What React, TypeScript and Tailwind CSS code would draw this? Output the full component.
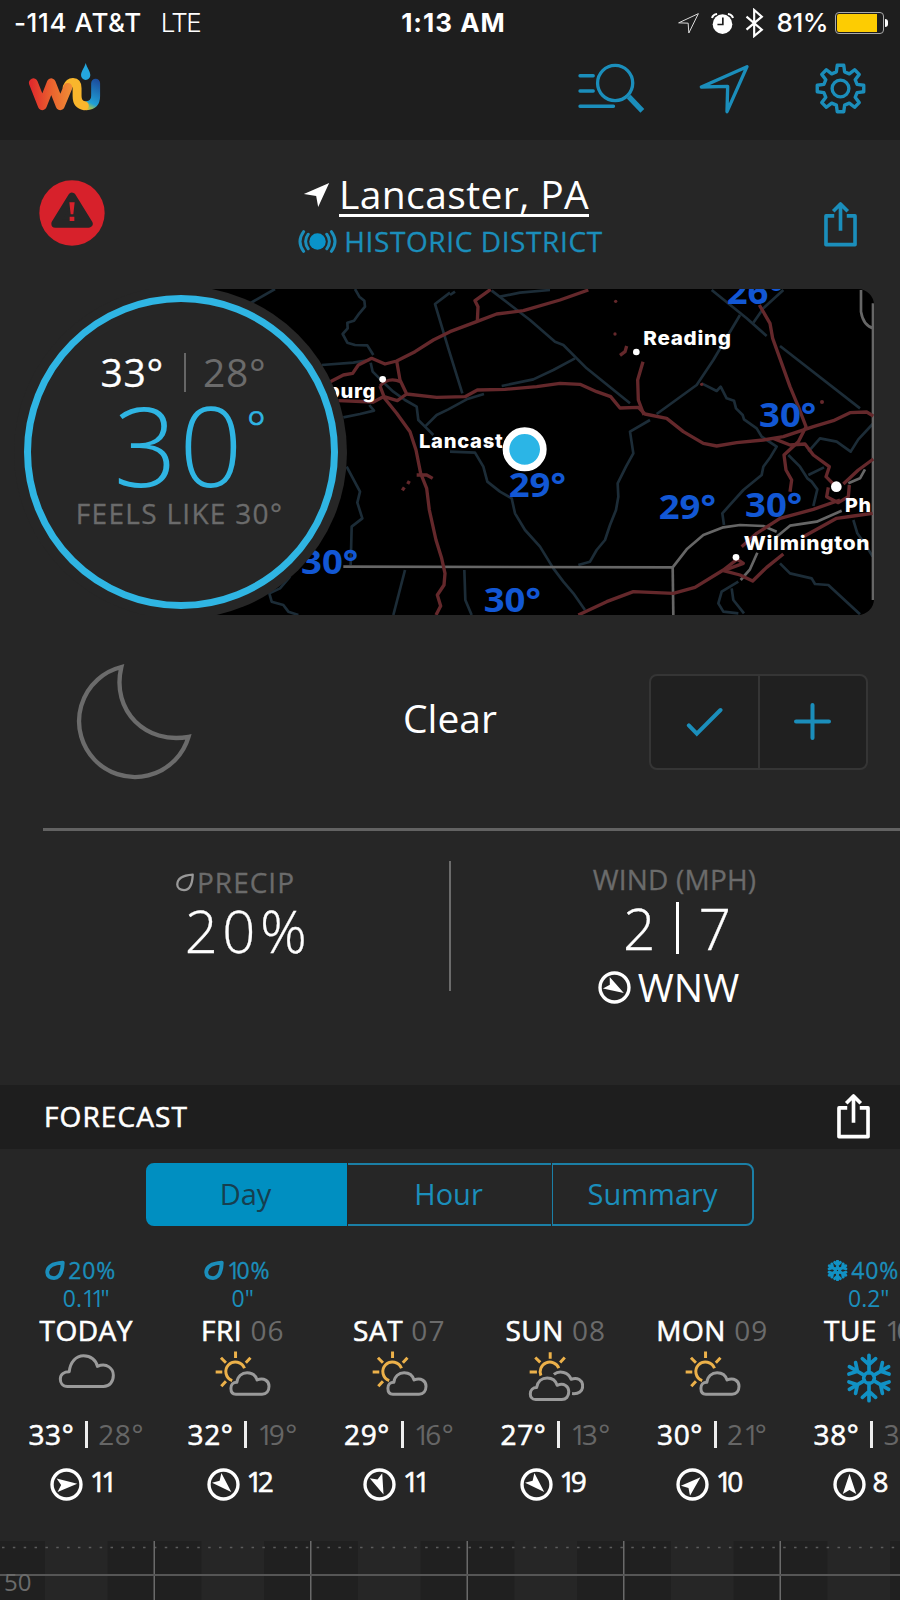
import type { ReactNode } from "react";

const BLUE = "#1b8ebb";

type Sky = "cloud" | "sunCloud" | "sunClouds" | "snow";

interface Day {
  name: string;
  date?: string;
  chance?: string;
  amount?: string;
  snow?: boolean;
  sky: Sky;
  high: string;
  low: string;
  wind: string;
  heading: number;
}

const days: Day[] = [
  { name: "TODAY", chance: "20%", amount: '0.11"', sky: "cloud", high: "33°", low: "28°", wind: "11", heading: 86 },
  { name: "FRI", date: "06", chance: "10%", amount: '0"', sky: "sunCloud", high: "32°", low: "19°", wind: "12", heading: 134 },
  { name: "SAT", date: "07", sky: "sunCloud", high: "29°", low: "16°", wind: "11", heading: 158 },
  { name: "SUN", date: "08", sky: "sunClouds", high: "27°", low: "13°", wind: "19", heading: 134 },
  { name: "MON", date: "09", sky: "sunCloud", high: "30°", low: "21°", wind: "10", heading: 48 },
  { name: "TUE", date: "10", chance: "40%", amount: '0.2"', snow: true, sky: "snow", high: "38°", low: "31°", wind: "8", heading: 0 },
];

// Eight-tooth gear outline around the origin
const gearPath =
  Array.from({ length: 8 }, (_, i) => {
    const at = (deg: number, r: number) => {
      const a = ((i * 45 + deg - 90) * Math.PI) / 180;
      return `${(Math.cos(a) * r).toFixed(1)},${(Math.sin(a) * r).toFixed(1)}`;
    };
    return `${i === 0 ? "M" : "L"}${at(-14, 51)} L${at(-8, 70)} L${at(8, 70)} L${at(14, 51)}`;
  }).join(" ") + " Z";

// Tightens the wide tabular "1" of the UI font
function Num({ text }: { text: string }) {
  return (
    <>
      {text.split("").map((c, i) =>
        c === "1" ? (
          <span key={i} className="tracking-[-0.17em]">
            1
          </span>
        ) : (
          c
        ),
      )}
    </>
  );
}

function Logo() {
  return (
    <svg viewBox="82 185 220 148" className="w-[73px] h-[49px]" fill="none" strokeWidth="27" strokeLinecap="round" strokeLinejoin="round">
      <defs>
        <linearGradient id="warm" gradientUnits="userSpaceOnUse" x1="90" y1="0" x2="215" y2="0">
          <stop offset="0" stopColor="#e02a2c" />
          <stop offset="0.5" stopColor="#ea622e" />
          <stop offset="1" stopColor="#f08f36" />
        </linearGradient>
        <linearGradient id="cool" gradientUnits="userSpaceOnUse" x1="246" y1="328" x2="288" y2="240">
          <stop offset="0.02" stopColor="#f9b62c" />
          <stop offset="0.14" stopColor="#9bbf5a" />
          <stop offset="0.3" stopColor="#1fa0d6" />
          <stop offset="1" stopColor="#1c4f9f" />
        </linearGradient>
      </defs>
      <path d="M258 317 Q286 316 286 288 V249" stroke="url(#cool)" />
      <path d="M200 262 Q206 247 217 247 Q230 248 230 264 V288 Q230 314 252 317" stroke="#f9b62c" />
      <path d="M98 248 L125 317 L152 248 L179 317 L202 262" stroke="url(#warm)" />
      <path d="M256 188 C260 203 270 214 270 225 A14 14 0 0 1 242 225 C242 214 252 203 256 188Z" fill="#24a6dd" />
    </svg>
  );
}

function ShareIcon({ color }: { color: string }) {
  return (
    <svg viewBox="1122 605 100 137" className="w-[33px] h-[46px]" fill="none" stroke={color} strokeWidth="11" strokeLinejoin="round">
      <path d="M1153 649 H1128 V736 H1216 V649 H1191" />
      <path d="M1172 694 V614 M1150 635 L1172 613 L1194 635" />
    </svg>
  );
}

function Compass({ heading }: { heading: number }) {
  return (
    <svg viewBox="-49 -49 98 98" className="w-[33px] h-[33px] shrink-0">
      <circle r="43" fill="none" stroke="#fff" strokeWidth="10" />
      <path d="M0 -32 L20 28 L0 16 L-20 28Z" fill="#fff" transform={`rotate(${heading})`} />
    </svg>
  );
}

function Drop({ color, width }: { color: string; width: number }) {
  return (
    <svg viewBox="133 598 62 62" className="w-[20px] h-[20px] shrink-0" fill="none" stroke={color} strokeWidth={width} strokeLinejoin="round">
      <path d="M188 606 C158 608 140 619 140 637 C140 648 149 654 161 654 C181 654 187 630 188 606Z" />
    </svg>
  );
}

function Snowflake({ small }: { small?: boolean }) {
  const arms = [0, 60, 120, 180, 240, 300];
  return (
    <svg
      viewBox="-75 -75 150 150"
      className={small ? "w-[21px] h-[21px] shrink-0" : "w-[50px] h-[50px] mt-[4px]"}
      fill="none"
      stroke="#1191c4"
      strokeWidth={small ? 21 : 11}
      strokeLinecap="round"
    >
      <circle r="16" />
      {arms.map((a) => (
        <path key={a} d="M0 -16 V-68 M0 -40 L-20 -58 M0 -40 L20 -58" transform={`rotate(${a})`} />
      ))}
    </svg>
  );
}

const GOLD = "#ecb14a";
const CLOUD = "#9a9a9a";

function SkyIcon({ sky }: { sky: Sky }) {
  if (sky === "snow") return <Snowflake />;
  if (sky === "cloud") {
    return (
      <svg viewBox="174 57 172 150" className="w-[57px] h-[50px]" fill="none" stroke={CLOUD} strokeWidth="9">
        <path d="M203 170 C187 170 181 158 181 147 C181 133 192 125 208 125 C211 95 229 77 251 77 C273 77 289 90 293 109 C322 97 341 116 341 136 C341 155 330 170 311 170Z" strokeLinejoin="round" />
      </svg>
    );
  }
  if (sky === "sunCloud") {
    return (
      <svg viewBox="643 56 172 150" className="w-[57px] h-[50px]" fill="none" strokeWidth="9">
        <g stroke={GOLD}>
          <path d="M735 114 A29 29 0 1 0 698 151" />
          <path d="M708 63 V83 M753 82 L739 97 M664 82 L679 97 M648 125 H668 M665 168 L679 153" />
        </g>
        <path d="M709 192 C697 192 694 182 694 174 C694 163 701 156 712 156 C714 138 727 127 743 127 C759 127 769 136 773 149 C794 141 809 152 809 168 C809 182 801 192 788 192Z" stroke={CLOUD} strokeLinejoin="round" />
      </svg>
    );
  }
  return (
    <svg viewBox="232 57 172 162" className="w-[57px] h-[54px]" fill="none" strokeWidth="9">
      <g stroke={GOLD}>
        <path d="M274 137 A28 28 0 0 1 328 114" />
        <path d="M302 66 V86 M346 82 L332 97 M257 82 L272 97 M240 126 H262" />
      </g>
      <g stroke={CLOUD} strokeLinejoin="round">
        <path d="M313 133 C330 120 357 126 365 148 C384 140 400 151 400 168 C400 184 388 193 368 191" />
        <path d="M258 209 C246 209 242 200 242 192 C242 180 250 173 261 173 C264 154 277 144 293 144 C308 144 319 153 323 166 C344 158 358 169 358 185 C358 200 350 209 337 209Z" />
      </g>
    </svg>
  );
}

const waterways = [
  "M750 70 L825 27",
  "M1065 27 L1078 50 L1093 62 L1095 80 L1078 100 L1062 122 L1042 128 L1043 145 L1028 162 L1042 188 L1065 195 L1102 196 L1120 225",
  "M965 255 L1060 248 L1108 240",
  "M1112 248 L1118 275 L1148 305 L1180 335 L1215 360 L1250 380 L1255 420 L1275 440 L1310 405 L1345 388 L1400 358 L1452 342",
  "M1275 440 L1300 465",
  "M1350 38 L1305 72 L1345 205 L1387 340",
  "M1030 412 L1080 402 L1122 392 L1108 375",
  "M1040 560 L1080 635 L1072 668 L1087 715 L1055 740 L1052 855",
  "M1215 870 L1180 1005",
  "M870 890 L840 925 L808 940 L815 965 L850 975 L865 995 L895 1005",
  "M1350 45 L1365 35",
  "M1475 32 L1590 120 L1665 185 L1690 195 L1760 265 L1890 370",
  "M1500 50 L1560 38 L1650 30",
  "M1725 235 L1660 270 L1600 298 L1505 318",
  "M1350 515 L1425 518 L1450 560 L1462 605 L1500 635 L1535 655 L1545 700 L1575 750 L1620 800 L1660 865 L1690 905 L1720 940 L1755 990",
  "M1393 870 L1396 960 L1415 1005",
  "M1950 420 L1890 455 L1900 520 L1878 560 L1853 610 L1855 650 L1848 690 L1830 735 L1815 780 L1790 810 L1770 845 L1735 855",
  "M1970 402 L2090 315 L2140 240 L2220 105",
  "M2135 30 L2240 115 L2300 168 M2340 198 L2580 385",
  "M2350 30 L2290 85 L2260 128",
  "M2105 310 L2150 333 L2162 320 L2180 355 L2202 362 L2208 385 L2228 405 L2232 418 L2270 445 L2285 470 L2330 500 L2312 530 L2290 560 L2285 585 L2230 630 L2185 680 L2167 700 L2172 735",
  "M2365 525 L2400 560 L2422 595 L2435 605 L2452 628 L2440 678",
  "M2425 515 L2460 475 L2510 485 L2552 515 L2575 478 L2618 432",
  "M2425 585 L2472 562",
  "M2560 720 L2572 760 L2600 800 L2618 830",
  "M2340 850 L2370 880 L2435 895 L2445 912 L2485 915 L2580 1003",
  "M2215 905 L2165 935 L2155 970 L2170 995 L2215 1000 M2195 925 L2200 960 L2232 1000",
];

const roads = [
  "M985 308 L1030 285 L1058 280 L1075 255 L1115 235 L1155 252 L1190 243 L1245 215 L1300 180 L1350 155 L1430 125 L1490 102 L1570 92 L1680 60 L1765 30",
  "M1432 125 L1434 80 L1425 62 L1472 28",
  "M1190 243 L1200 300 L1220 342 L1310 352 L1395 350 L1432 330 L1515 328 L1610 320 L1680 310 L1740 313 L1790 335 L1832 350 L1860 384 L1915 382 L1935 402 L2000 415 L2050 455 L2110 490 L2150 498 L2210 488 L2290 480 L2350 470 L2440 440 L2500 422 L2550 398 L2600 396 L2620 408",
  "M1140 318 Q1165 290 1202 305 M1220 342 L1192 362 L1152 350 L1140 318",
  "M1015 362 L1120 366 L1150 350",
  "M1150 350 L1190 400 L1230 455 L1248 510 L1262 580 L1280 625 L1288 690 L1308 780 L1325 835 L1335 880 L1332 915 L1312 945 L1322 978 L1308 1005",
  "M1250 585 L1280 585 L1298 595",
  "M1228 603 L1223 612 M1213 622 L1207 631",
  "M1929 245 L1913 300 L1915 360 L1932 405",
  "M1880 198 L1875 215 L1860 226",
  "M2278 75 L2310 130 L2318 175 L2345 250 L2370 320 L2395 380 L2418 440 L2395 485 L2352 525 L2358 570 L2375 600 L2370 635",
  "M2320 475 L2370 495 L2415 492 L2440 525 L2488 560 L2478 590 L2500 612",
  "M1735 1005 L1820 965 L1900 935 L2020 940 L2085 922 L2170 870 L2215 835 M2225 800 L2270 760 L2340 715 L2440 688 L2520 660",
  "M2170 872 L2220 885 L2258 903 L2300 862 L2350 822 M2410 770 L2510 715 L2560 708 L2618 700",
  "M2485 622 L2480 650 L2515 668 L2545 650 L2548 615 M2530 612 L2575 570 L2620 537",
  "M2170 872 L2230 850 L2200 830",
];

const borders = [
  "M1030 860 L2018 862 L2060 808 L2110 765 L2170 742 L2220 735 L2290 738 L2330 755",
  "M2018 862 L2020 1005",
  "M2222 900 L2250 868 L2272 818 M2330 770 L2370 737 L2450 725 L2525 692 M2545 610 L2580 595 L2595 568",
  "M2583 30 V95 Q2590 138 2622 145",
  "M2619 70 V960",
];

const cities = [
  { label: "burg", x: 981, y: 353, w: 147, dot: [1148, 298, 10] },
  { label: "Lancast", x: 1257, y: 503, w: 253 },
  { label: "Reading", x: 1930, y: 194, w: 265, dot: [1909, 216, 10] },
  { label: "Wilmington", x: 2231, y: 809, w: 380, dot: [2208, 832, 10] },
  { label: "Ph", x: 2535, y: 695, w: 80, dot: [2509, 620, 16] },
];

const readings = [
  { label: "26°", x: 2180, y: 71 },
  { label: "30°", x: 2277, y: 442 },
  { label: "29°", x: 1526, y: 650 },
  { label: "29°", x: 1976, y: 718 },
  { label: "30°", x: 2235, y: 712 },
  { label: "30°", x: 903, y: 881 },
  { label: "30°", x: 1451, y: 995 },
];

function RadarMap() {
  return (
    <svg viewBox="543 27 2079 978" className="w-[693px] h-[326px] rounded-r-2xl bg-black" fill="none" strokeLinejoin="round">
      <g stroke="#1c2c37" strokeWidth="8">
        {waterways.map((d) => (
          <path key={d} d={d} />
        ))}
      </g>
      <g stroke="#666" strokeWidth="8">
        {borders.map((d) => (
          <path key={d} d={d} />
        ))}
      </g>
      <g stroke="#64282b" strokeWidth="10">
        {roads.map((d) => (
          <path key={d} d={d} />
        ))}
      </g>
      <g fill="#64282b">
        <circle cx="1847" cy="64" r="5" />
        <circle cx="1845" cy="162" r="5" />
        <circle cx="2105" cy="313" r="5" />
        <circle cx="2466" cy="366" r="6" />
      </g>
      <g fill="#1257d4" className="font-['Noto_Sans','Open_Sans',sans-serif] font-bold text-[100px]">
        {readings.map((r) => (
          <text key={`${r.x}-${r.y}`} x={r.x} y={r.y} textLength="172" lengthAdjust="spacingAndGlyphs">
            {r.label}
          </text>
        ))}
      </g>
      <g fill="#fff" className="font-['Inter',sans-serif] font-extrabold text-[58px] tracking-[2px]">
        {cities.map((c) => (
          <text key={c.label} x={c.x} y={c.y} textLength={c.w} lengthAdjust="spacingAndGlyphs">
            {c.label}
          </text>
        ))}
        {cities.map((c) => c.dot && <circle key={c.label} cx={c.dot[0]} cy={c.dot[1]} r={c.dot[2]} />)}
      </g>
      <circle cx="1574" cy="508" r="56" fill="#2bb5e6" stroke="#fff" strokeWidth="20" />
    </svg>
  );
}

function StatusBar() {
  return (
    <div className="flex items-center h-[46px] pl-[14px] pr-[12px] font-['Inter',sans-serif] text-[26px] leading-[46px]">
      <div className="flex flex-1">
        <span className="font-medium tracking-[0.6px]">-114 AT&amp;T</span>
        <span className="font-light ml-[19px] tracking-[-1.6px]">LTE</span>
      </div>
      <span className="font-bold tracking-[1px] pl-[5px]">1:13 AM</span>
      <div className="flex flex-1 items-center justify-end">
        <svg viewBox="677 30 70 70" className="w-[23px] h-[23px]" fill="none" stroke="#ddd" strokeWidth="3">
          <path d="M742 35 L713 94 L711 64 L682 63Z" />
        </svg>
        <svg viewBox="784 32 68 68" className="w-[23px] h-[23px] ml-[11px]">
          <circle cx="818" cy="68" r="29" fill="#fff" />
          <path d="M787 50 Q790 39 802 38 M849 50 Q846 39 834 38" fill="none" stroke="#fff" strokeWidth="6" />
          <path d="M819 48 V69 H803" fill="none" stroke="#1e1e1e" strokeWidth="5" />
        </svg>
        <svg viewBox="885 22 56 90" className="w-[19px] h-[30px] ml-[11px]" fill="none" stroke="#fff" strokeWidth="6.5">
          <path d="M889 48 L935 87 L912 106 V28 L935 48 L889 87" />
        </svg>
        <span className="font-medium ml-[13px] tracking-[-0.5px]">81%</span>
        <div className="flex items-center ml-[7px]">
          <div className="w-[49px] h-[22px] rounded-[4px] border border-[#aaa] p-px">
            <div className="w-[40px] h-full bg-[#fdcc02] rounded-l-[2px]" />
          </div>
          <div className="w-[3px] h-[8px] ml-px bg-white rounded-r-full" />
        </div>
      </div>
    </div>
  );
}

function NavBar() {
  return (
    <div className="flex items-start h-[94px] pl-[28px] pr-[34px] pt-[16px]">
      <Logo />
      <div className="flex ml-auto mt-px">
        <svg viewBox="384 189 202 153" className="w-[67px] h-[51px]" fill="none" stroke={BLUE} strokeWidth="10" strokeLinecap="round">
          <path d="M390 227 H430 M390 273 H430 M390 319 H491" />
          <circle cx="496" cy="249" r="53" />
          <path d="M537 290 L578 333" strokeWidth="16" strokeLinecap="butt" />
        </svg>
        <svg viewBox="746 192 153 153" className="w-[51px] h-[51px] ml-[54px]" fill="none" stroke={BLUE} strokeWidth="10" strokeLinejoin="round">
          <path d="M890 203 L830 338 L832 262 L753 264Z" />
        </svg>
        <svg viewBox="-76 -76 152 152" className="w-[51px] h-[51px] ml-[65px]" fill="none" stroke={BLUE} strokeWidth="10" strokeLinejoin="round">
          <path d={gearPath} />
          <circle r="25" />
        </svg>
      </div>
    </div>
  );
}

function LocationHeader() {
  return (
    <div className="flex items-start h-[149px] pl-[39px] pr-[43px]">
      <svg viewBox="117 540 198 198" className="w-[66px] h-[66px] mt-[40px]">
        <circle cx="216" cy="639" r="98" fill="#d7212b" />
        <path d="M216 590 L266 671 H166Z" fill="#262626" stroke="#262626" strokeWidth="24" strokeLinejoin="round" />
        <path d="M208 607 H224 L220 643 H212Z M209 650 H223 V663 H209Z" fill="#d7212b" />
      </svg>
      <div className="flex-1 flex flex-col items-center pt-[32px] pr-[37px]">
        <div className="flex">
          <svg viewBox="906 546 80 78" className="w-[27px] h-[26px] mt-[10px]">
            <path d="M984 549 L951 621 L945 588 L908 582Z" fill="#fff" />
          </svg>
          <span className="ml-[9px] h-[45px] border-b-[3px] border-white text-[39px] leading-[44px] tracking-[0.4px] whitespace-nowrap">
            Lancaster, PA
          </span>
        </div>
        <div className="flex items-center mt-[6px] ml-[9px] text-[#1b8ebb]">
          <svg viewBox="892 690 118 74" className="w-[39px] h-[25px]" fill="none" stroke={BLUE} strokeWidth="9" strokeLinecap="round">
            <circle cx="951" cy="727" r="25" fill="#0a93c9" stroke="none" />
            <path d="M923 705 Q907 727 923 749 M909 697 Q887 727 909 757 M979 705 Q995 727 979 749 M993 697 Q1015 727 993 757" />
          </svg>
          <span className="ml-[7px] text-[28px] leading-[36px] tracking-[0.6px] whitespace-nowrap [-webkit-text-stroke:0.3px]">HISTORIC DISTRICT</span>
        </div>
      </div>
      <div className="mt-[61px]">
        <ShareIcon color={BLUE} />
      </div>
    </div>
  );
}

function CurrentTemp() {
  return (
    <div className="relative h-[326px] pl-[181px] overflow-hidden">
      <RadarMap />
      {/* temperature dial sits over the left edge of the map */}
      <div className="absolute left-[14px] -top-[3px] w-[333px] h-[333px] rounded-full bg-[#262626] p-[9px_10px]">
        <div className="w-[314px] h-[314px] rounded-full border-[7px] border-[#2fb5e3] flex flex-col items-center">
          <div className="flex items-center mt-[46px] h-[48px] ml-[5px] text-[39px] leading-[48px] tracking-[0.7px]">
            <span className="[-webkit-text-stroke:0.3px]">33°</span>
            <span className="w-[2px] h-[39px] bg-[#666] ml-[20px] mr-[17px]" />
            <span className="text-[#6b6b6b]">28°</span>
          </div>
          <div className="flex h-[95px] pl-[18px] text-[#2fb5e3] font-light">
            <span className="text-[111px] leading-[96px] tracking-[2px]">30</span>
            <span className="text-[46px] leading-[46px] mt-[8px] ml-[2px] [-webkit-text-stroke:0.7px]">°</span>
          </div>
          <span className="text-[28px] leading-[44px] tracking-[1.3px] -ml-[3px] text-[#6b6b6b] [-webkit-text-stroke:0.3px]">FEELS LIKE 30°</span>
        </div>
      </div>
    </div>
  );
}

function Conditions() {
  return (
    <div className="flex items-center h-[213px] pl-[76px] pr-[32px]">
      <svg viewBox="228 70 348 352" className="w-[116px] h-[117px]" fill="none" stroke="#6b6b6b" strokeWidth="13">
        <path d="M364 82 A168 168 0 1 0 566 292 C440 316 332 215 364 82Z" />
      </svg>
      <span className="ml-[211px] mb-[8px] text-[39px] leading-[48px]">Clear</span>
      <div className="flex w-[219px] h-[96px] ml-auto rounded-lg border-2 border-[#353535] bg-[#202020]">
        <div className="flex-1 flex items-center justify-center border-r-2 border-[#353535]">
          <svg viewBox="708 202 110 90" className="w-[37px] h-[30px]" fill="none" stroke={BLUE} strokeWidth="12" strokeLinecap="round">
            <path d="M716 257 L740 282 L811 211" />
          </svg>
        </div>
        <div className="flex-1 flex items-center justify-center">
          <svg viewBox="1034 190 110 110" className="w-[37px] h-[37px]" fill="none" stroke={BLUE} strokeWidth="12" strokeLinecap="round">
            <path d="M1040 245 H1138 M1089 196 V294" />
          </svg>
        </div>
      </div>
    </div>
  );
}

function Stats() {
  return (
    <div className="flex h-[257px] ml-[43px] border-t-[3px] border-[#626262]">
      <div className="flex flex-col items-center w-[406px] pt-[33px]">
        <div className="flex items-center h-[36px] text-[28px] leading-[36px] text-[#6b6b6b] -ml-[22px]">
          <Drop color="#999" width={7} />
          <span className="ml-[2px] tracking-[1px] [-webkit-text-stroke:0.3px]">PRECIP</span>
        </div>
        <span className="text-[58px] leading-[61px] font-light tracking-[4.5px] pl-[4px] [-webkit-text-stroke:0.3px]">20%</span>
      </div>
      <div className="w-[2px] h-[130px] mt-[30px] bg-[#6b6b6b]" />
      <div className="flex-1 flex flex-col items-center pt-[30px]">
        <span className="text-[28px] leading-[36px] tracking-[0.2px] pr-[2px] text-[#6b6b6b] [-webkit-text-stroke:0.3px]">WIND (MPH)</span>
        <div className="flex items-center h-[62px] pl-[3px] text-[57px] leading-[62px] font-light [-webkit-text-stroke:0.3px]">
          <span>2</span>
          <span className="w-[3px] h-[52px] bg-white mx-[20px]" />
          <span>7</span>
        </div>
        <div className="flex items-center h-[56px] -ml-[14px]">
          <Compass heading={120} />
          <span className="ml-[7px] text-[39px] leading-[56px]">WNW</span>
        </div>
      </div>
    </div>
  );
}

function Tab({ active, className, children }: { active?: boolean; className: string; children: ReactNode }) {
  return (
    <div
      className={`h-[63px] text-center text-[29px] leading-[58px] border-2 ${
        active ? "bg-[#008fc1] border-[#008fc1] text-[#163f50]" : "border-[#1b7fa6] text-[#1b8ebb]"
      } ${className}`}
    >
      {children}
    </div>
  );
}

function DayColumn({ day }: { day: Day }) {
  return (
    <div className="flex flex-col items-center w-[156.5px] shrink-0">
      <div className="flex flex-col items-center h-[56px] text-[23px] text-[#1b8ebb]">
        {day.chance && (
          <>
            <div className="flex items-center h-[28px] -ml-[11px]">
              {day.snow ? <Snowflake small /> : <Drop color={BLUE} width={12} />}
              <span className="ml-[3px] leading-[28px] tracking-[0.9px] [-webkit-text-stroke:0.3px]">
                <Num text={day.chance} />
              </span>
            </div>
            <span className="leading-[28px]">
              <Num text={day.amount ?? ""} />
            </span>
          </>
        )}
      </div>
      <div className="text-[28px] leading-[36px] tracking-[0.5px] whitespace-nowrap">
        <span className="[-webkit-text-stroke:0.6px]">{day.name}</span>
        {day.date && (
          <span className="text-[#6b6b6b] tracking-[1px]">
            {" "}
            <Num text={day.date} />
          </span>
        )}
      </div>
      <div className="flex h-[64px] pt-px items-start">
        <SkyIcon sky={day.sky} />
      </div>
      <div className="flex items-center text-[28px] leading-[44px] whitespace-nowrap">
        <span className="tracking-[0.6px] [-webkit-text-stroke:0.6px]">{day.high}</span>
        <span className="w-[3px] h-[27px] bg-[#eee] ml-[11px] mr-[10px]" />
        <span className="text-[#666] tracking-[0.6px]">
          <Num text={day.low} />
        </span>
      </div>
      <div className="flex items-center w-full h-[34px] mt-[11px] pl-[42px]">
        <Compass heading={day.heading} />
        <span className="ml-[7px] -mt-[7px] text-[28px] leading-[34px] [-webkit-text-stroke:0.6px]">
          <Num text={day.wind} />
        </span>
      </div>
    </div>
  );
}

function Chart() {
  const cols = [0, 1, 2, 3, 4, 5];
  return (
    <svg viewBox="0 0 900 59" className="w-[900px] h-[59px] shrink-0">
      {cols.map((i) => (
        <rect key={i} x={i * 156.5 - 49} width="94" height="59" fill="#202020" />
      ))}
      <rect x="890" width="10" height="59" fill="#202020" />
      <path d="M2 6.5 H900" stroke="#5c5c5c" strokeWidth="1.5" strokeDasharray="2.5 8.35" />
      {cols.map((i) => (
        <rect key={i} x={i * 156.5 + 153.5} width="1.500" height="59" fill="#6a6a6a" />
      ))}
      <path d="M0 34 H900" stroke="#565656" strokeWidth="2" />
      <text x="4" y="50" fill="#6b6b6b" className="text-[24px]">
        50
      </text>
    </svg>
  );
}

export default function App() {
  return (
    <div className="w-[900px] h-[1600px] overflow-hidden flex flex-col bg-[#262626] text-white font-['Open_Sans','Noto_Sans',sans-serif]">
      <header className="h-[140px] shrink-0 bg-[#1e1e1e]">
        <StatusBar />
        <NavBar />
      </header>
      <LocationHeader />
      <CurrentTemp />
      <Conditions />
      <Stats />

      <div className="flex items-center h-[64px] shrink-0 pl-[44px] pr-[30px] bg-[#1e1e1e]">
        <span className="text-[28px] leading-[36px] tracking-[1.1px] -mt-[2px] [-webkit-text-stroke:0.6px]">FORECAST</span>
        <div className="ml-auto -mt-[2px]">
          <ShareIcon color="#fff" />
        </div>
      </div>

      <div className="flex h-[77px] shrink-0 pt-[14px] pl-[146px]">
        <Tab active className="w-[201px] rounded-l-lg pr-[2px]">Day</Tab>
        <Tab className="w-[203px] ml-px border-x-0 pr-[2px]">Hour</Tab>
        <Tab className="w-[202px] ml-px border-l rounded-r-lg">Summary</Tab>
      </div>

      <div className="flex h-[315px] shrink-0 pt-[30px] pl-[8px]">
        {days.map((day) => (
          <DayColumn key={day.name} day={day} />
        ))}
      </div>
      <Chart />
    </div>
  );
}
